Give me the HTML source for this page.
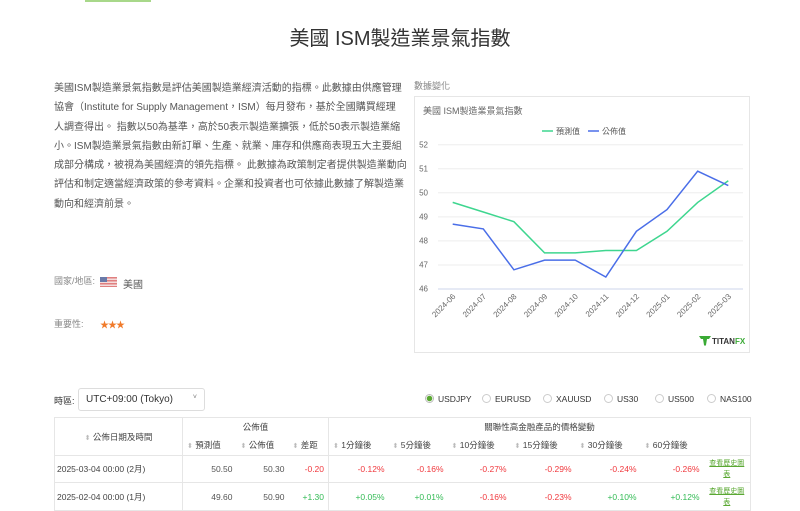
<!DOCTYPE html>
<html><head><meta charset="utf-8"><style>
*{margin:0;padding:0;box-sizing:border-box}
body{width:800px;height:500px;overflow:hidden;background:#fff;font-family:"Liberation Sans","Noto Sans CJK TC",sans-serif;color:#555;position:relative}
.a{position:absolute;white-space:nowrap}
.p{position:absolute;left:54px;top:79px;font-size:10px;line-height:19.3px;color:#555;white-space:nowrap}
table{border-collapse:collapse;position:absolute;left:54px;top:417px;width:696px;font-size:8.5px;table-layout:fixed}
td{border-bottom:1px solid #e6e6e6;padding:0 4px;white-space:nowrap;overflow:hidden}
.r{color:#f0383d;text-align:right}.g{color:#33bb55;text-align:right}
.s{color:#bbb;font-size:7px}
.rad{display:inline-block;width:9px;height:9px;border:1px solid #ccc;border-radius:50%;vertical-align:-1px;margin-right:4px}
.bl{border-left:1px solid #e6e6e6}.br{border-right:1px solid #e6e6e6}
.rd{position:absolute;top:394px;font-size:8.5px;color:#333;white-space:nowrap}
</style></head><body>
<div class="a" style="left:85px;top:0;width:66px;height:2px;background:#a8d88a"></div>
<div class="a" style="left:0;width:800px;top:22px;text-align:center;font-size:20px;color:#333">美國 ISM製造業景氣指數</div>
<div class="p">美國ISM製造業景氣指數是評估美國製造業經濟活動的指標。此數據由供應管理<br>協會（Institute for Supply Management，ISM）每月發布，基於全國購買經理<br>人調查得出。 指數以50為基準，高於50表示製造業擴張，低於50表示製造業縮<br>小。ISM製造業景氣指數由新訂單、生產、就業、庫存和供應商表現五大主要組<br>成部分構成，被視為美國經濟的領先指標。 此數據為政策制定者提供製造業動向<br>評估和制定適當經濟政策的參考資料。企業和投資者也可依據此數據了解製造業<br>動向和經濟前景。</div>
<div class="a" style="left:54px;top:274px;font-size:9px;color:#888">國家/地區:</div>
<div class="a" style="left:100px;top:277px;width:17px;height:10px;background:repeating-linear-gradient(#e08080 0 1.5px,#f4dcdc 1.5px 3px)"><div style="width:7px;height:5px;background:#6a7aa8"></div></div>
<div class="a" style="left:123px;top:276px;font-size:10px;color:#555">美國</div>
<div class="a" style="left:54px;top:317px;font-size:9px;color:#888">重要性:</div>
<div class="a" style="left:100px;top:318px;font-size:9px;color:#f07a2a;letter-spacing:-1px">★★★</div>
<div class="a" style="left:414px;top:79px;font-size:9px;color:#888">數據變化</div>
<div class="a" style="left:414px;top:96px;width:336px;height:257px;border:1px solid #e6e6e6"></div>
<svg class="a" style="left:0;top:0" width="800" height="500">
<text x="423" y="114" font-size="9" fill="#666" font-family="Liberation Sans,Noto Sans CJK TC,sans-serif">美國 ISM製造業景氣指數</text>
<line x1="542" y1="131" x2="553" y2="131" stroke="#3ed68f" stroke-width="1.5"/><text x="556" y="134" font-size="8" fill="#555" font-family="Noto Sans CJK TC,sans-serif">預測值</text>
<line x1="588" y1="131" x2="599" y2="131" stroke="#4a6ee8" stroke-width="1.5"/><text x="602" y="134" font-size="8" fill="#555" font-family="Noto Sans CJK TC,sans-serif">公佈值</text>
<g stroke="#eee" stroke-width="1"><line x1="438" y1="144.7" x2="743" y2="144.7"/><line x1="438" y1="168.8" x2="743" y2="168.8"/><line x1="438" y1="192.8" x2="743" y2="192.8"/><line x1="438" y1="216.9" x2="743" y2="216.9"/><line x1="438" y1="240.9" x2="743" y2="240.9"/><line x1="438" y1="265" x2="743" y2="265"/></g>
<line x1="438" y1="289" x2="743" y2="289" stroke="#ccd6eb"/>
<g font-size="8" fill="#666" text-anchor="end" font-family="Liberation Sans,sans-serif"><text x="428" y="147.5">52</text><text x="428" y="171.5">51</text><text x="428" y="195.5">50</text><text x="428" y="219.5">49</text><text x="428" y="243.5">48</text><text x="428" y="267.5">47</text><text x="428" y="291.5">46</text></g>
<g font-size="8" fill="#666" text-anchor="end" font-family="Liberation Sans,sans-serif">
<text transform="translate(456,297) rotate(-45)">2024-06</text><text transform="translate(486.6,297) rotate(-45)">2024-07</text><text transform="translate(517.2,297) rotate(-45)">2024-08</text><text transform="translate(547.9,297) rotate(-45)">2024-09</text><text transform="translate(578.5,297) rotate(-45)">2024-10</text><text transform="translate(609.1,297) rotate(-45)">2024-11</text><text transform="translate(639.7,297) rotate(-45)">2024-12</text><text transform="translate(670.3,297) rotate(-45)">2025-01</text><text transform="translate(701,297) rotate(-45)">2025-02</text><text transform="translate(731.6,297) rotate(-45)">2025-03</text></g>
<polyline fill="none" stroke="#3ed68f" stroke-width="1.5" points="452.7,202.4 483.3,212 513.9,221.7 544.6,252.9 575.2,252.9 605.8,250.5 636.4,250.5 667,231.3 697.7,202.4 728.3,180.8"/>
<polyline fill="none" stroke="#4a6ee8" stroke-width="1.5" points="452.7,224.1 483.3,228.9 513.9,269.8 544.6,260.1 575.2,260.1 605.8,277 636.4,231.3 667,209.6 697.7,171.2 728.3,185.6"/>
<path d="M699 336h12l-2 3h-2l-1 6-1 1-1-1-1-6h-2z" fill="#3aaa35"/>
<text x="712" y="344" font-size="8" font-weight="bold" fill="#333" font-family="Liberation Sans,sans-serif">TITAN<tspan fill="#3aaa35">FX</tspan></text>
</svg>
<div class="a" style="left:54px;top:394px;font-size:9px;color:#333">時區:</div>
<div class="a" style="left:78px;top:388px;width:127px;height:23px;border:1px solid #ddd;border-radius:3px;font-size:10px;color:#333;padding:5px 7px">UTC+09:00 (Tokyo)<span style="position:absolute;right:7px;top:5px;font-size:7px;color:#777">˅</span></div>
<div class="rd" style="left:425px"><span class="rad" style="border-color:#bbb;background:radial-gradient(#5aa832 2.5px,#fff 3px)"></span>USDJPY</div>
<div class="rd" style="left:482px"><span class="rad"></span>EURUSD</div>
<div class="rd" style="left:543px"><span class="rad"></span>XAUUSD</div>
<div class="rd" style="left:604px"><span class="rad"></span>US30</div>
<div class="rd" style="left:655px"><span class="rad"></span>US500</div>
<div class="rd" style="left:707px"><span class="rad"></span>NAS100</div>
<table>
<colgroup><col style="width:128px"><col style="width:54px"><col style="width:52px"><col style="width:40px"><col style="width:60px"><col style="width:59px"><col style="width:63px"><col style="width:65px"><col style="width:65px"><col style="width:63px"><col style="width:47px"></colgroup>
<tr style="color:#444;height:18px;border-top:1px solid #e6e6e6"><td rowspan="2" class="bl br" style="text-align:center"><span class="s">⬍</span> 公佈日期及時間</td><td colspan="3" class="br" style="text-align:center;border-bottom:none">公佈值</td><td colspan="7" class="br" style="text-align:center;border-bottom:none">關聯性高金融產品的價格變動</td></tr>
<tr style="color:#444;height:20px"><td><span class="s">⬍</span> 預測值</td><td><span class="s">⬍</span> 公佈值</td><td class="br"><span class="s">⬍</span> 差距</td><td><span class="s">⬍</span> 1分鐘後</td><td><span class="s">⬍</span> 5分鐘後</td><td><span class="s">⬍</span> 10分鐘後</td><td><span class="s">⬍</span> 15分鐘後</td><td><span class="s">⬍</span> 30分鐘後</td><td><span class="s">⬍</span> 60分鐘後</td><td class="br"></td></tr>
<tr style="height:27px"><td class="bl br" style="color:#444;padding-left:2px">2025-03-04 00:00 (2月)</td><td style="text-align:right">50.50</td><td style="text-align:right">50.30</td><td class="r br">-0.20</td><td class="r">-0.12%</td><td class="r">-0.16%</td><td class="r">-0.27%</td><td class="r">-0.29%</td><td class="r">-0.24%</td><td class="r">-0.26%</td><td class="br" style="color:#5aa832;font-size:7px;text-decoration:underline;white-space:normal;text-align:center;line-height:11px">查看歷史圖表</td></tr>
<tr style="height:28px"><td class="bl br" style="color:#444;padding-left:2px">2025-02-04 00:00 (1月)</td><td style="text-align:right">49.60</td><td style="text-align:right">50.90</td><td class="g br">+1.30</td><td class="g">+0.05%</td><td class="g">+0.01%</td><td class="r">-0.16%</td><td class="r">-0.23%</td><td class="g">+0.10%</td><td class="g">+0.12%</td><td class="br" style="color:#5aa832;font-size:7px;text-decoration:underline;white-space:normal;text-align:center;line-height:11px">查看歷史圖表</td></tr>
</table>
</body></html>
